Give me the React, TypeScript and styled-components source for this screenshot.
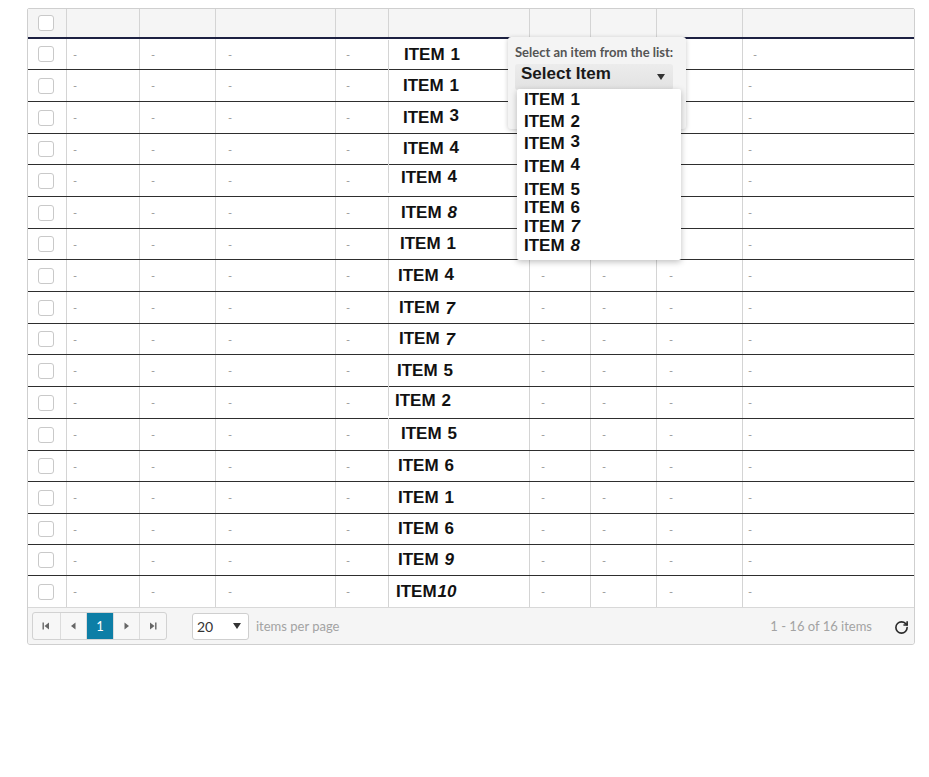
import styled, { createGlobalStyle } from "styled-components"
import { RotateCw } from "lucide-react"

type Row = { n: string; it?: boolean; x: number; h: number; dy?: number; ny?: number; tight?: boolean }

const rows: Row[] = [
  { n: "1", x: 15, h: 31, dy: 1 },
  { n: "1", x: 14, h: 32 },
  { n: "3", x: 14, h: 32, ny: -2 },
  { n: "4", x: 14, h: 31, ny: -1 },
  { n: "4", x: 12, h: 32, dy: -3, ny: -1 },
  { n: "8", it: true, x: 12, h: 32 },
  { n: "1", x: 11, h: 31 },
  { n: "4", x: 9, h: 32, ny: -1 },
  { n: "7", it: true, x: 10, h: 32, ny: 1 },
  { n: "7", it: true, x: 10, h: 31, ny: 1 },
  { n: "5", x: 8, h: 32 },
  { n: "2", x: 6, h: 32, dy: -2 },
  { n: "5", x: 12, h: 32, dy: -1 },
  { n: "6", x: 9, h: 31 },
  { n: "1", x: 9, h: 32 },
  { n: "6", x: 9, h: 31 },
  { n: "9", it: true, x: 9, h: 31 },
  { n: "10", it: true, x: 7, h: 31, tight: true },
]

const options = [
  { n: "1", gap: 3 },
  { n: "2", gap: 6 },
  { n: "3", gap: 6, ny: -2 },
  { n: "4", gap: 7, ny: -2 },
  { n: "5", gap: 7 },
  { n: "6", gap: 2 },
  { n: "7", gap: 3, it: true },
  { n: "8", gap: 3, it: true },
]

// padding-left of the dash in each data column
const dashPad = [0, 6, 11, 12, 10, 0, 11, 11, 12, 5]

// cells that sit under the open dropdown
const hidden = (ri: number, ci: number) => ri < 7 && ci >= 5 && ci <= 7

export default function App() {
  return (
    <Page>
      <GlobalStyle />
      <Grid>
        <HeaderRow>
          <CheckCell>
            <Check />
          </CheckCell>
          {dashPad.slice(1).map((_, i) => (
            <HeadCell key={i} />
          ))}
        </HeaderRow>
        {rows.map((r, ri) => (
          <BodyRow key={ri} $h={r.h} $last={ri === rows.length - 1}>
            <CheckCell>
              <Check />
            </CheckCell>
            {dashPad.slice(1).map((p, ci) =>
              ci === 4 ? (
                <ItemCell key={ci} $x={r.x} $dy={r.dy || 0}>
                  ITEM
                  <Num $it={!!r.it} $ny={r.ny || 0} $tight={!!r.tight}>
                    {r.n}
                  </Num>
                </ItemCell>
              ) : (
                <Cell key={ci} $pad={ci === 8 && ri === 0 ? 10 : p}>
                  {hidden(ri, ci) ? "" : "-"}
                </Cell>
              )
            )}
          </BodyRow>
        ))}
        <Footer>
          <Pager>
            <PageBtn aria-label="first">
              <svg width="8" height="8" viewBox="0 0 8 8">
                <rect x="0.5" y="0.5" width="1.4" height="7" fill="#666" />
                <path d="M7 0.5 L2.5 4 L7 7.5 Z" fill="#666" />
              </svg>
            </PageBtn>
            <PageBtn aria-label="prev">
              <svg width="6" height="8" viewBox="0 0 6 8">
                <path d="M5.5 0.5 L1 4 L5.5 7.5 Z" fill="#666" />
              </svg>
            </PageBtn>
            <PageBtn $active>1</PageBtn>
            <PageBtn aria-label="next">
              <svg width="6" height="8" viewBox="0 0 6 8">
                <path d="M0.5 0.5 L5 4 L0.5 7.5 Z" fill="#666" />
              </svg>
            </PageBtn>
            <PageBtn aria-label="last">
              <svg width="8" height="8" viewBox="0 0 8 8">
                <path d="M1 0.5 L5.5 4 L1 7.5 Z" fill="#666" />
                <rect x="6.1" y="0.5" width="1.4" height="7" fill="#666" />
              </svg>
            </PageBtn>
          </Pager>
          <SizeSelect>
            20
            <Caret />
          </SizeSelect>
          <Muted>items per page</Muted>
          <Spacer />
          <Muted>1 - 16 of 16 items</Muted>
          <Refresh>
            <RotateCw size={15} strokeWidth={2.6} color="#2b2b2b" />
          </Refresh>
        </Footer>

        <Popup>
          <Label>Select an item from the list:</Label>
          <SelectBox>
            Select Item
            <Caret />
          </SelectBox>
          <List>
            {options.map((o) => (
              <Option key={o.n} $gap={o.gap}>
                ITEM
                <Num $it={!!o.it} $ny={o.ny || 0} $tight={false}>
                  {o.n}
                </Num>
              </Option>
            ))}
          </List>
        </Popup>
      </Grid>
    </Page>
  )
}

const GlobalStyle = createGlobalStyle`
  body {
    margin: 0;
    background: #ffffff;
    font-family: Lato, "Open Sans", sans-serif;
  }
`

const Page = styled.div`
  padding: 8px 0 0 27px;
  height: 769px;
`

const Grid = styled.div`
  position: relative;
  width: 888px;
  border: 1px solid #cfcfcf;
  border-radius: 2px 2px 3px 3px;
  box-sizing: border-box;
`

const cols = "38px 73px 76px 120px 53px 141px 61px 66px 86px 172px"

const HeaderRow = styled.div`
  display: grid;
  grid-template-columns: ${cols};
  height: 30px;
  box-sizing: border-box;
  background: #f5f5f5;
  border-bottom: 2px solid #1d2142;
`

const BodyRow = styled.div<{ $h: number; $last: boolean }>`
  display: grid;
  grid-template-columns: ${cols};
  height: ${(p) => p.$h}px;
  box-sizing: border-box;
  background: #fff;
  border-bottom: ${(p) => (p.$last ? "none" : "1px solid #2e2e2e")};
`

const HeadCell = styled.div`
  border-left: 1px solid #d4d4d4;
`

const CheckCell = styled.div`
  display: flex;
  align-items: center;
  justify-content: center;
  padding-right: 2px;
`

const Check = styled.span`
  width: 16px;
  height: 16px;
  box-sizing: border-box;
  border: 1px solid #c9c9c9;
  border-radius: 3px;
  background: #fff;
`

const Cell = styled.div<{ $pad: number }>`
  border-left: 1px solid #d4d4d4;
  display: flex;
  align-items: center;
  padding-left: ${(p) => p.$pad}px;
  color: #9a9a9a;
  font-size: 11px;
`

const ItemCell = styled.div<{ $x: number; $dy: number }>`
  border-left: 1px solid #d4d4d4;
  display: flex;
  align-items: center;
  padding-left: ${(p) => p.$x}px;
  font-family: "Liberation Sans", Arial, sans-serif;
  font-weight: 700;
  font-size: 17px;
  color: #111;
  position: relative;
  top: ${(p) => p.$dy}px;
  white-space: nowrap;
`

const Num = styled.span<{ $it: boolean; $ny: number; $tight: boolean }>`
  margin-left: ${(p) => (p.$tight ? 1 : 6)}px;
  font-style: ${(p) => (p.$it ? "italic" : "normal")};
  position: relative;
  top: ${(p) => p.$ny}px;
`

const Footer = styled.div`
  display: flex;
  align-items: center;
  height: 37px;
  box-sizing: border-box;
  padding: 0 5px 0 4px;
  background: #f5f5f5;
  border-top: 1px solid #d8d8d8;
  border-radius: 0 0 3px 3px;
  font-size: 13px;
`

const Pager = styled.div`
  display: flex;
  border: 1px solid #d2d2d2;
  border-radius: 3px;
  background: #f7f7f7;
  overflow: hidden;
`

const PageBtn = styled.div<{ $active?: boolean }>`
  width: 26.6px;
  height: 26px;
  display: flex;
  align-items: center;
  justify-content: center;
  box-sizing: border-box;
  border-left: 1px solid #dcdcdc;
  &:first-child {
    border-left: none;
  }
  background: ${(p) => (p.$active ? "#0d7ea6" : "transparent")};
  color: ${(p) => (p.$active ? "#fff" : "#666")};
  font-size: 13px;
`

const SizeSelect = styled.div`
  margin-left: 25px;
  width: 57px;
  height: 27px;
  box-sizing: border-box;
  display: flex;
  align-items: center;
  justify-content: space-between;
  padding: 0 7px 0 4px;
  background: #fff;
  border: 1px solid #cfcfcf;
  border-radius: 3px;
  color: #333;
  font-size: 14px;
`

const Caret = styled.span`
  width: 0;
  height: 0;
  border-left: 4px solid transparent;
  border-right: 4px solid transparent;
  border-top: 6px solid #333;
`

const Muted = styled.span`
  margin-left: 7px;
  color: #a3a3a3;
  font-size: 13px;
`

const Spacer = styled.div`
  flex: 1;
`

const Refresh = styled.span`
  display: flex;
  margin: 2px 0 0 22px;
`

const Popup = styled.div`
  position: absolute;
  left: 480px;
  top: 28px;
  width: 178px;
  height: 92px;
  box-sizing: border-box;
  padding: 8px 0 0 7px;
  background: #f4f4f4;
  border-radius: 3px;
  box-shadow: 0 1px 5px rgba(0, 0, 0, 0.22);
  z-index: 2;
`

const Label = styled.div`
  font-family: Lato, sans-serif;
  font-weight: 700;
  font-size: 13px;
  color: #555;
  line-height: 14px;
`

const SelectBox = styled.div`
  margin-top: 5px;
  width: 158px;
  height: 26px;
  box-sizing: border-box;
  display: flex;
  align-items: center;
  justify-content: space-between;
  padding: 0 8px 6px 6px;
  background: linear-gradient(#ececec, #e2e2e2);
  border-radius: 3px;
  font-family: "Liberation Sans", Arial, sans-serif;
  font-weight: 700;
  font-size: 17px;
  color: #1a1a1a;
  & > span {
    margin-top: 6px;
  }
`

const List = styled.div`
  position: absolute;
  left: 9px;
  top: 52px;
  width: 164px;
  height: 171px;
  box-sizing: border-box;
  padding-left: 7px;
  background: #fff;
  border-radius: 2px;
  box-shadow: 0 2px 6px rgba(0, 0, 0, 0.25);
  font-family: "Liberation Sans", Arial, sans-serif;
  font-weight: 700;
  font-size: 17px;
  color: #111;
`

const Option = styled.div<{ $gap: number }>`
  margin-top: ${(p) => p.$gap}px;
  line-height: 16px;
  height: 16px;
  white-space: nowrap;
`
